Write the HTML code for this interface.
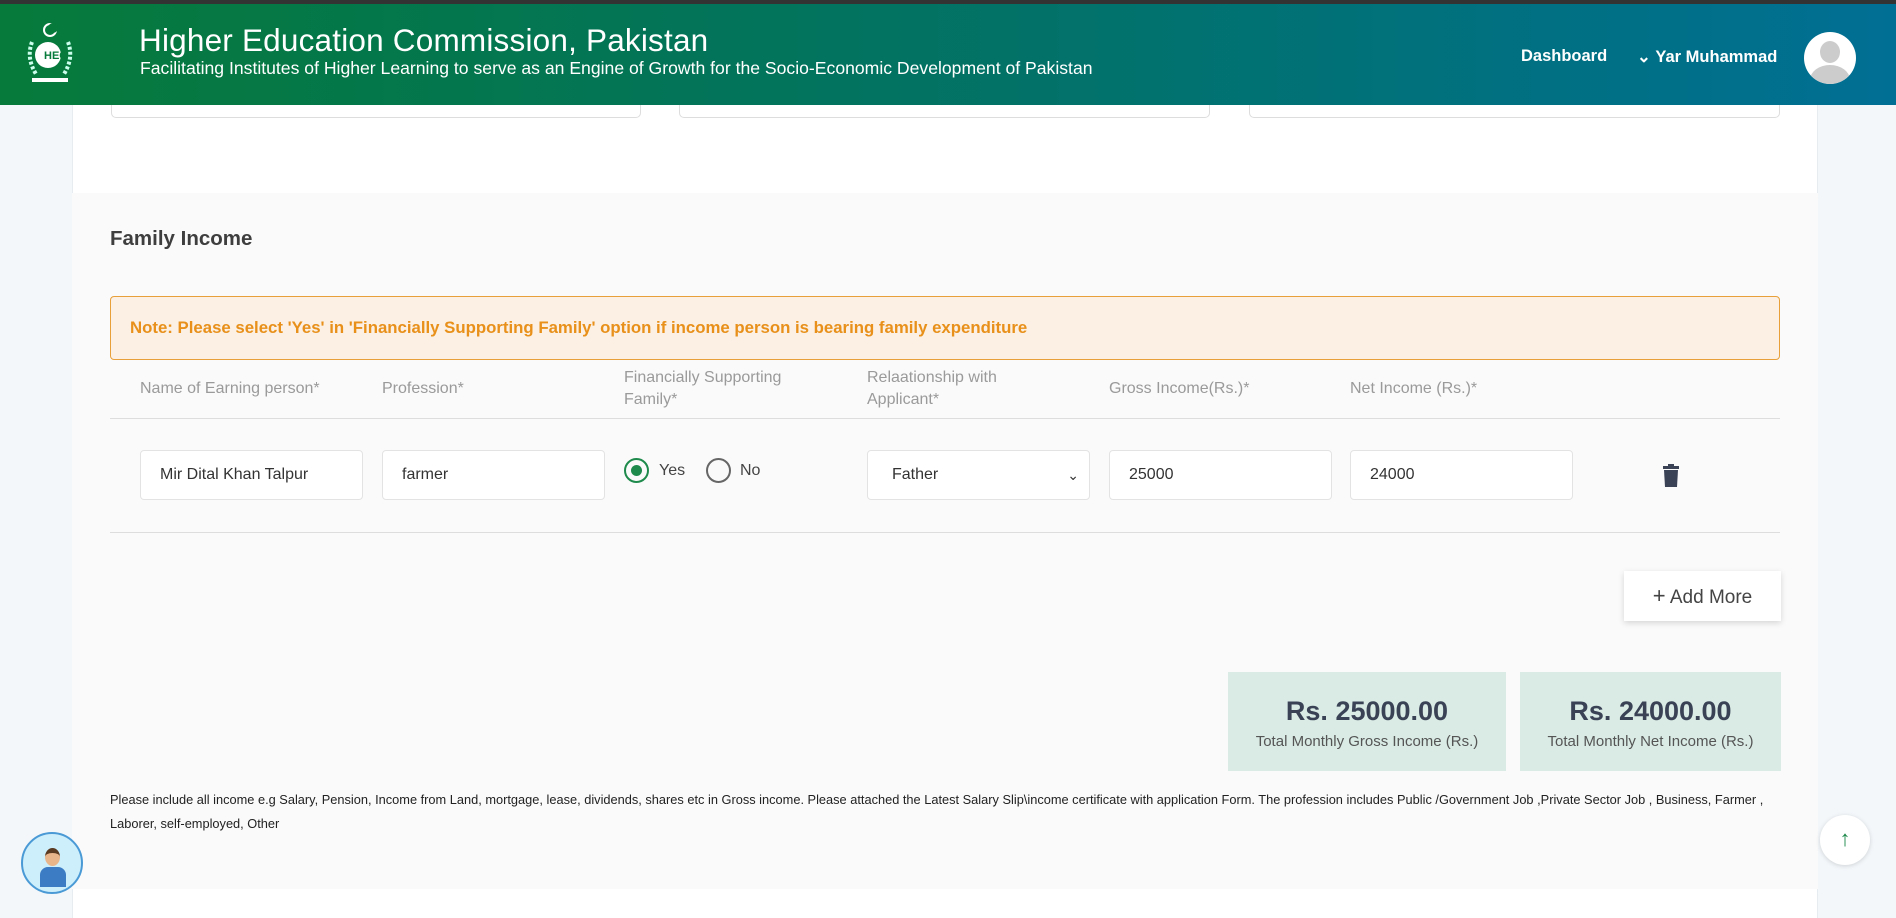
<!DOCTYPE html>
<html><head><meta charset="utf-8"><style>
*{box-sizing:border-box;margin:0;padding:0}
body{width:1896px;height:918px;overflow:hidden;background:#f3f7fa;font-family:"Liberation Sans",sans-serif;position:relative}
.abs{position:absolute}
.topbar{left:0;top:0;width:1896px;height:4px;background:#333}
.hdr{left:0;top:4px;width:1896px;height:101px;background:linear-gradient(90deg,#067a3a 0%,#02735f 45%,#006f94 100%);color:#fff}
.main{left:72px;top:105px;width:1746px;height:813px;background:#fff;border-left:1px solid #e6ecef;border-right:1px solid #e6ecef}
.sec{left:72px;top:193px;width:1746px;height:696px;background:#fafafa}
.tb{top:96px;height:22px;border:1px solid #ddd;border-top:none;border-radius:0 0 5px 5px;background:#fff}
.inp{height:50px;width:223px;border:1px solid #e3e3e3;border-radius:4px;background:#fff;font-size:16px;color:#333;padding-left:19px;line-height:48px}
.hd{color:#9a9a9a;font-size:16px;line-height:22px}
.line{left:110px;width:1670px;height:1px;background:#ddd}
.tot{background:#d9ebe4;text-align:center;color:#3a4256}
</style></head><body>
<div class="abs topbar"></div>
<div class="abs hdr">
 <svg class="abs" style="left:24px;top:16px" width="52" height="68" viewBox="0 0 52 68">
  <circle cx="26" cy="10" r="6" fill="none" stroke="#fff" stroke-width="2"/><circle cx="29" cy="8" r="5" fill="#067a3a"/>
  <circle cx="24" cy="35" r="13" fill="#fff"/><text x="20" y="39" font-size="11" font-weight="bold" fill="#067a3a" font-family="Liberation Sans">HEC</text>
  <path d="M8 22 Q2 38 12 54 M44 22 Q50 38 40 54" stroke="#cfe" stroke-width="4" fill="none" stroke-dasharray="3 2"/>
  <rect x="8" y="58" width="36" height="4" fill="#fff"/>
 </svg>
 <div class="abs" style="left:139px;top:18px;font-size:31.5px;font-weight:500;letter-spacing:.2px">Higher Education Commission, Pakistan</div>
 <div class="abs" style="left:140px;top:54px;font-size:17.6px">Facilitating Institutes of Higher Learning to serve as an Engine of Growth for the Socio-Economic Development of Pakistan</div>
 <div class="abs" style="left:1521px;top:43px;font-size:16.5px;font-weight:bold">Dashboard</div>
 <div class="abs" style="left:1637px;top:43px;font-size:16.5px;font-weight:bold">&#8964;&nbsp;Yar Muhammad</div>
 <div class="abs" style="left:1804px;top:28px;width:52px;height:52px;border-radius:50%;background:#fff;overflow:hidden">
  <div class="abs" style="left:16px;top:9px;width:20px;height:22px;border-radius:50%;background:#ccc"></div>
  <div class="abs" style="left:6px;top:33px;width:40px;height:30px;border-radius:50%;background:#ccc"></div>
 </div>
</div>
<div class="abs main"></div>
<div class="abs tb" style="left:111px;width:530px;top:105px;height:13px"></div>
<div class="abs tb" style="left:679px;width:531px;top:105px;height:13px"></div>
<div class="abs tb" style="left:1249px;width:531px;top:105px;height:13px"></div>
<div class="abs sec"></div>
<div class="abs" style="left:110px;top:227px;font-size:20.5px;color:#3e3e3e;font-weight:bold">Family Income</div>
<div class="abs" style="left:110px;top:296px;width:1670px;height:64px;border:1px solid #e8a03a;border-radius:4px;background:#fbf0e3;color:#e8901a;font-weight:bold;font-size:16.8px;line-height:62px;padding-left:19px">Note: Please select 'Yes' in 'Financially Supporting Family' option if income person is bearing family expenditure</div>
<div class="abs hd" style="left:140px;top:378px">Name of Earning person*</div>
<div class="abs hd" style="left:382px;top:378px">Profession*</div>
<div class="abs hd" style="left:624px;top:367px">Financially Supporting<br>Family*</div>
<div class="abs hd" style="left:867px;top:367px">Relaationship with<br>Applicant*</div>
<div class="abs hd" style="left:1109px;top:378px">Gross Income(Rs.)*</div>
<div class="abs hd" style="left:1350px;top:378px">Net Income (Rs.)*</div>
<div class="abs line" style="top:418px"></div>
<div class="abs inp" style="left:140px;top:450px">Mir Dital Khan Talpur</div>
<div class="abs inp" style="left:382px;top:450px">farmer</div>
<div class="abs" style="left:624px;top:458px;width:25px;height:25px;border-radius:50%;border:2px solid #1e8a4c"><div class="abs" style="left:5px;top:5px;width:11px;height:11px;border-radius:50%;background:#1e8a4c"></div></div>
<div class="abs" style="left:659px;top:462px;font-size:16px;color:#444">Yes</div>
<div class="abs" style="left:706px;top:458px;width:25px;height:25px;border-radius:50%;border:2px solid #666"></div>
<div class="abs" style="left:740px;top:462px;font-size:16px;color:#444">No</div>
<div class="abs inp" style="left:867px;top:450px;padding-left:24px">Father<span class="abs" style="right:10px;top:0;font-size:14px">&#8964;</span></div>
<div class="abs inp" style="left:1109px;top:450px">25000</div>
<div class="abs inp" style="left:1350px;top:450px">24000</div>
<svg class="abs" style="left:1662px;top:464px" width="18" height="24" viewBox="0 0 18 24"><rect x="1" y="2" width="16" height="3" fill="#3a4256"/><rect x="6" y="0" width="6" height="3" fill="#3a4256"/><path d="M2 6h14l-1 17H3z" fill="#3a4256"/></svg>
<div class="abs line" style="top:532px"></div>
<div class="abs" style="left:1624px;top:571px;width:157px;height:50px;background:#fff;box-shadow:0 2px 6px rgba(0,0,0,.15);font-size:19px;color:#444;line-height:50px;text-align:center"><span style="font-size:22px">+</span> Add More</div>
<div class="abs tot" style="left:1228px;top:672px;width:278px;height:99px"><div style="font-size:27px;font-weight:bold;margin-top:24px">Rs. 25000.00</div><div style="font-size:15px;margin-top:6px;color:#555">Total Monthly Gross Income (Rs.)</div></div>
<div class="abs tot" style="left:1520px;top:672px;width:261px;height:99px"><div style="font-size:27px;font-weight:bold;margin-top:24px">Rs. 24000.00</div><div style="font-size:15px;margin-top:6px;color:#555">Total Monthly Net Income (Rs.)</div></div>
<div class="abs" style="left:110px;top:788px;width:1690px;font-size:12.8px;line-height:24px;color:#222">Please include all income e.g Salary, Pension, Income from Land, mortgage, lease, dividends, shares etc in Gross income. Please attached the Latest Salary Slip\income certificate with application Form. The profession includes Public /Government Job ,Private Sector Job , Business, Farmer ,<br>Laborer, self-employed, Other</div>
<div class="abs" style="left:21px;top:832px;width:62px;height:62px;border-radius:50%;background:#cdeefb;border:2px solid #4a9ad6;overflow:hidden">
 <div class="abs" style="left:22px;top:14px;width:15px;height:18px;border-radius:50%;background:#e8b48a;border-top:5px solid #5a3a20"></div>
 <div class="abs" style="left:17px;top:33px;width:26px;height:20px;border-radius:8px 8px 0 0;background:#3b7cc4"></div>
</div>
<div class="abs" style="left:1820px;top:815px;width:50px;height:50px;border-radius:50%;background:#fff;box-shadow:0 1px 5px rgba(0,0,0,.15);color:#1e8a4c;font-size:22px;text-align:center;line-height:48px">&#8593;</div>
</body></html>
